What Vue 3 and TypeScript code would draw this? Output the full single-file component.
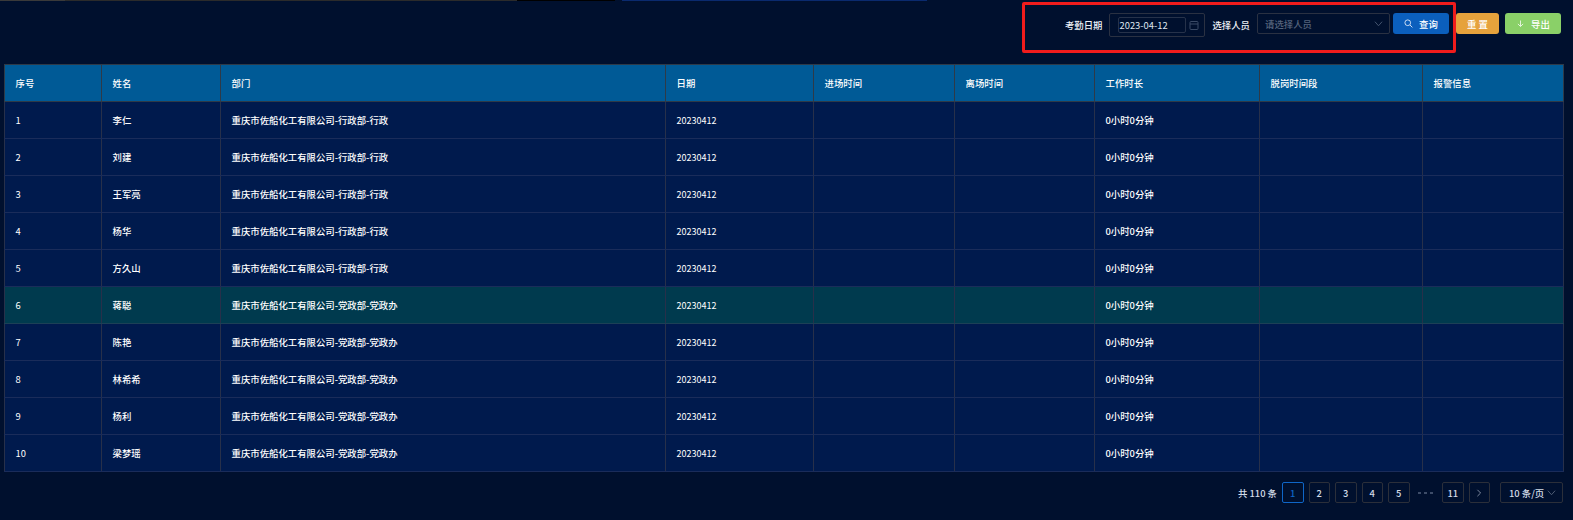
<script setup lang="ts">
interface Row { name: string; dept: string }
const co = '重庆市佐船化工有限公司-'
const rows: Row[] = [
  { name: '李仁', dept: co + '行政部-行政' },
  { name: '刘建', dept: co + '行政部-行政' },
  { name: '王军亮', dept: co + '行政部-行政' },
  { name: '杨华', dept: co + '行政部-行政' },
  { name: '方久山', dept: co + '行政部-行政' },
  { name: '蒋聪', dept: co + '党政部-党政办' },
  { name: '陈艳', dept: co + '党政部-党政办' },
  { name: '林希希', dept: co + '党政部-党政办' },
  { name: '杨利', dept: co + '党政部-党政办' },
  { name: '梁梦瑶', dept: co + '党政部-党政办' },
]
const heads = ['序号', '姓名', '部门', '日期', '进场时间', '离场时间', '工作时长', '脱岗时间段', '报警信息']
const cols = ['c1', 'c2', 'c3', 'c4', 'c5', 'c6', 'c7', 'c8', 'c9']
const pages = ['2', '3', '4', '5']
</script>

<template>
  <div class="page">
    <div class="strip">
      <span class="s1"></span><span class="s2"></span><span class="s3"></span><span class="s4"></span><span class="s5"></span>
    </div>
    <div class="toolbar">
      <span class="label l1">考勤日期</span>
      <div class="date">
        <span class="date-input">2023-04-12</span>
        <svg class="cal" viewBox="0 0 10 10" width="10" height="10" fill="none" stroke="#3a4a66" stroke-width="1">
          <rect x="1" y="1.5" width="8" height="8" rx="1" />
          <path d="M1 4h8" />
        </svg>
      </div>
      <span class="label l2">选择人员</span>
      <div class="select">
        <span class="ph">请选择人员</span>
        <svg viewBox="0 0 10 10" width="9" height="9" fill="none" stroke="#4a5a75" stroke-width="1">
          <path d="M1 3l4 4.5L9 3" />
        </svg>
      </div>
      <button class="btn blue">
        <svg viewBox="0 0 12 12" width="9" height="9" fill="none" stroke="#dce8f8" stroke-width="1.2">
          <circle cx="5" cy="5" r="3.8" />
          <path d="M8 8l3.2 3.2" />
        </svg>
        <span>查询</span>
      </button>
      <button class="btn orange"><span class="wide">重置</span></button>
      <button class="btn green">
        <svg viewBox="0 0 12 12" width="9" height="9" fill="none" stroke="#e4f4dc" stroke-width="1.3">
          <path d="M6 2v8M2.5 6.5L6 10l3.5-3.5" />
        </svg>
        <span>导出</span>
      </button>
      <div class="marker"></div>
    </div>

    <table class="grid">
      <colgroup>
        <col v-for="c in cols" :key="c" :class="c" />
      </colgroup>
      <thead>
        <tr>
          <th v-for="h in heads" :key="h">{{ h }}</th>
        </tr>
      </thead>
      <tbody>
        <tr v-for="(r, i) in rows" :key="i" :class="{ hl: i === 5 }">
          <td class="idx">{{ i + 1 }}</td>
          <td>{{ r.name }}</td>
          <td>{{ r.dept }}</td>
          <td class="num">20230412</td>
          <td></td>
          <td></td>
          <td>0小时0分钟</td>
          <td></td>
          <td></td>
        </tr>
      </tbody>
    </table>

    <div class="pager">
      <span class="total">共 110 条</span>
      <span class="pg active">1</span>
      <span v-for="p in pages" :key="p" class="pg">{{ p }}</span>
      <span class="dots"><i></i><i></i><i></i></span>
      <span class="pg">11</span>
      <span class="pg">
        <svg viewBox="0 0 10 10" width="8" height="8" fill="none" stroke="#9aa6b8" stroke-width="1">
          <path d="M3 1l4 4-4 4" />
        </svg>
      </span>
      <span class="size">
        10 条/页
        <svg viewBox="0 0 10 10" width="9" height="9" fill="none" stroke="#56647c" stroke-width="1">
          <path d="M1 3l4 4.5L9 3" />
        </svg>
      </span>
    </div>
  </div>
</template>

<style scoped>
.page {
  width: 1573px;
  height: 520px;
  overflow: hidden;
  background: #00102e;
  font-family: "Noto Sans CJK SC", "Liberation Sans", sans-serif;
  font-size: 9.4px;
  font-weight: 500;
  color: #fff;
}
.strip {
  display: flex;
  height: 1px;
  background: #00102e;
}
.s1 { width: 65px; background: #3a3a3a; }
.s2 { width: 452px; background: #2b2b2b; }
.s3 { width: 98px; background: #000; }
.s4 { width: 7px; background: #00102e; }
.s5 { width: 305px; background: #0a2a6e; }

.toolbar {
  position: relative;
  display: flex;
  align-items: flex-start;
  justify-content: flex-end;
  height: 63px;
  padding: 12px 12px 0 0;
  box-sizing: border-box;
}
.label { line-height: 24px; color: #eef2f8; }
.l1 { margin-right: 7px; }
.l2 { margin: 0 7px; }
.date {
  display: flex;
  align-items: center;
  box-sizing: border-box;
  width: 96px;
  height: 24px;
  padding-left: 8px;
  border: 1px solid #2a3142;
  border-radius: 2px;
}
.date-input {
  box-sizing: border-box;
  width: 68px;
  height: 16px;
  line-height: 14px;
  border: 1px solid #26324a;
  border-radius: 2px;
  font-weight: 400;
  color: #dfe6f0;
}
.cal { margin-left: 3px; }
.select {
  display: flex;
  align-items: center;
  justify-content: space-between;
  box-sizing: border-box;
  width: 133px;
  height: 21px;
  padding: 0 6px 0 7px;
  border: 1px solid #2a3142;
  border-radius: 2px;
}
.ph { color: #56647c; }
.btn {
  display: flex;
  align-items: center;
  justify-content: center;
  gap: 6px;
  box-sizing: border-box;
  height: 21px;
  padding: 0;
  border: 0;
  border-radius: 3px;
  color: #fff;
  font: inherit;
}
.wide { letter-spacing: 2px; margin-right: -2px; }
.blue { width: 56px; margin-left: 3px; background: #0b5fbd; }
.orange { width: 43px; margin-left: 7px; background: #e6a23c; }
.green { width: 56px; margin-left: 6px; background: #8ad068; }
.marker {
  position: absolute;
  left: 1022px;
  top: 1px;
  width: 434px;
  height: 51px;
  box-sizing: border-box;
  border: 3px solid #f01c1c;
  border-radius: 2px;
  pointer-events: none;
}

.grid {
  width: 1560px;
  margin-left: 4px;
  table-layout: fixed;
  border-collapse: collapse;
}
.c1 { width: 97px; }
.c2 { width: 119px; }
.c3 { width: 445px; }
.c4 { width: 148px; }
.c5 { width: 141px; }
.c6 { width: 140px; }
.c7 { width: 165px; }
.c8 { width: 163px; }
.c9 { width: 141px; }
th, td {
  height: 37px;
  padding: 0 0 0 10.5px;
  box-sizing: border-box;
  text-align: left;
  font-weight: 500;
  white-space: nowrap;
}
th {
  background: #005a96;
  border: 1px solid #2e3a48;
}
td {
  background: #001a4d;
  border: 1px solid #27304a;
  border-top-color: #1a2c5a;
  border-bottom-color: #1a2c5a;
}
.num { font-size: 9px; font-weight: 400; }
td.idx { font-weight: 400; }
.hl td {
  background: #003a4e;
  border-top-color: #1c4056;
  border-bottom-color: #1c4056;
}

.pager {
  display: flex;
  align-items: center;
  justify-content: flex-end;
  height: 21px;
  margin-top: 10px;
  padding-right: 10px;
  color: #d4dce8;
}
.total { margin-right: 5px; }
.pg {
  display: flex;
  align-items: center;
  justify-content: center;
  box-sizing: border-box;
  width: 21.5px;
  height: 21px;
  margin-right: 5px;
  border: 1px solid #2b2f3a;
  border-radius: 2px;
}
.pager .active { border-color: #0f66c8; color: #0f66c8; }
.dots {
  display: flex;
  justify-content: center;
  gap: 3px;
  width: 22.5px;
  margin-right: 5px;
}
.dots i {
  width: 3px;
  height: 2px;
  background: #3d4c68;
}
.size {
  display: flex;
  align-items: center;
  justify-content: space-between;
  box-sizing: border-box;
  width: 63px;
  height: 21px;
  margin-left: 5px;
  padding: 0 6px 0 8px;
  border: 1px solid #2b2f3a;
  border-radius: 2px;
}
</style>
